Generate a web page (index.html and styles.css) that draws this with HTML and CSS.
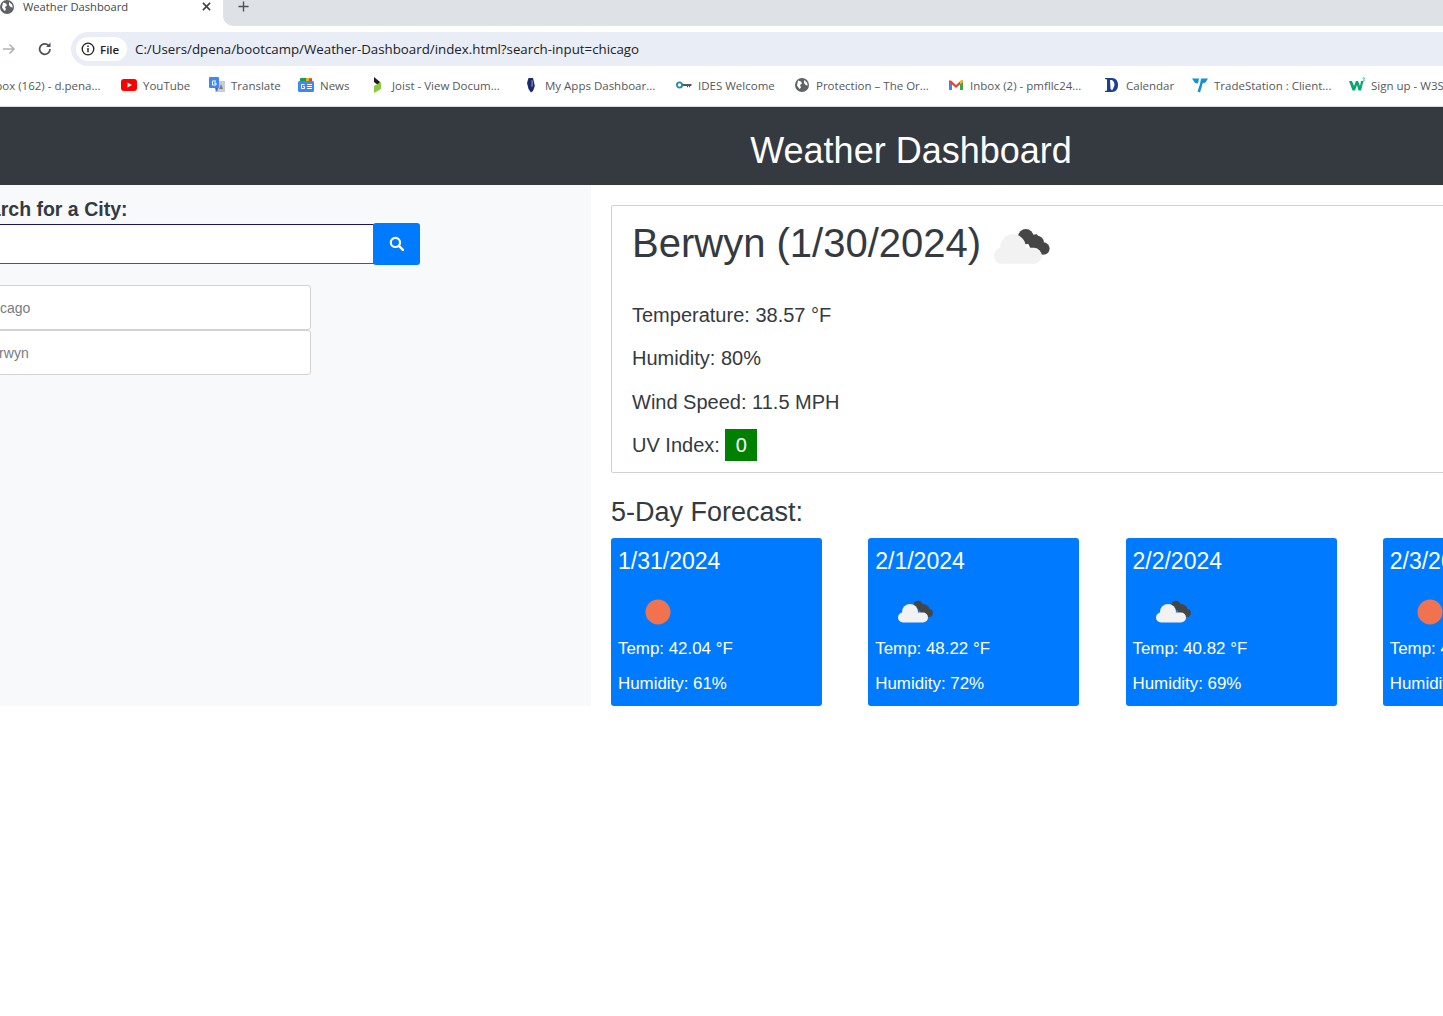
FILE: index.html
```html
<!DOCTYPE html>
<html>
<head>
	<title>Weather Dashboard</title>
	<link rel="stylesheet" href="styles.css">
</head>
<body>
	<svg class="defs" width="0" height="0">
		<symbol id="clouds" viewBox="0 0 50 50">
			<circle cx="28" cy="18.500" r="4.800" fill="#464646"/>
			<circle cx="35" cy="22.300" r="4.400" fill="#464646"/>
			<circle cx="39" cy="26" r="3.900" fill="#464646"/>
			<path d="M27 18l8-1 6 9-8 4z" fill="#464646"/>
			<circle cx="20" cy="25" r="8" fill="#f2f2f2"/>
			<rect x="8" y="25.500" width="30" height="10" rx="5" fill="#f2f2f2"/>
		</symbol>
		<symbol id="sun" viewBox="0 0 50 50">
			<circle cx="25" cy="25" r="12.500" fill="#f0724f"/>
		</symbol>
		<symbol id="globe" viewBox="0 0 16 16">
			<circle cx="8" cy="8" r="7" fill="#5f6368"/>
			<path d="M4 3.500l3 1 1 2-2 1.500 1 2.500-1.500 1.500L3 8.500zM10 3l3 2.500.8 3-2.300-.5-1.500-2z" fill="#fff"/>
		</symbol>
	</svg>

	<div class="tabstrip">
		<div class="tab">
			<svg class="tab-icon"><use href="#globe"/></svg>
			<span class="tab-title">Weather Dashboard</span>
			<svg class="tab-close" viewBox="0 0 10 10"><path d="M1 1l8 8M9 1l-8 8" stroke="#3c4043" stroke-width="1.700"/></svg>
		</div>
		<div class="tabs-rest">
			<svg class="tab-new" viewBox="0 0 12 12"><path d="M6 .5v11M.5 6h11" stroke="#4d5156" stroke-width="1.500"/></svg>
		</div>
	</div>

	<div class="toolbar">
		<svg class="nav-forward" viewBox="0 0 14 14"><path d="M1 7h11M7.500 2.500L12 7l-4.500 4.500" fill="none" stroke="#b0b3b8" stroke-width="1.600"/></svg>
		<svg class="nav-reload" viewBox="0 0 16 16"><path d="M13 8a5.200 5.200 0 1 1-1.600-3.700" fill="none" stroke="#4d5156" stroke-width="1.700"/><path d="M13.500 1.500v4.400H9.100z" fill="#4d5156"/></svg>
		<div class="omnibox">
			<div class="chip">
				<svg class="chip-icon" viewBox="0 0 14 14"><circle cx="7" cy="7" r="5.800" fill="none" stroke="#202124" stroke-width="1.300"/><path d="M7 6v4.200M7 3.500v1.400" stroke="#202124" stroke-width="1.400"/></svg>
				<span>File</span>
			</div>
			<span class="url">C:/Users/dpena/bootcamp/Weather-Dashboard/index.html?search-input=chicago</span>
		</div>
	</div>

	<div class="bookmarks">
		<span class="bm bm-first"><span>Inbox (162) - d.pena...</span></span>
		<span class="bm">
			<svg class="bm-icon" viewBox="0 0 16 16"><rect y="2" width="16" height="12" rx="3" fill="#f00"/><path d="M6.500 5.500v5L11 8z" fill="#fff"/></svg>
			<span>YouTube</span>
		</span>
		<span class="bm">
			<svg class="bm-icon" viewBox="0 0 16 16"><rect x="6" y="4" width="10" height="11" fill="#c9ccd1"/><path d="M12 7l-2 5h4z" fill="#7c8086"/><rect width="10" height="11" rx="1" fill="#4285f4"/><path d="M7 4H3.500v4H7V6H5" fill="none" stroke="#fff" stroke-width="1"/><path d="M6 11l2 4 1-4z" fill="#3367d6"/></svg>
			<span>Translate</span>
		</span>
		<span class="bm">
			<svg class="bm-icon" viewBox="0 0 16 16"><rect x="2" y="1" width="12" height="4" rx="1" fill="#0f9d58"/><rect x="8" y="1" width="6" height="4" rx="1" fill="#f4b400"/><rect x="11" y="1.500" width="3" height="3" fill="#db4437"/><rect y="4" width="16" height="11" rx="1.500" fill="#4285f4"/><path d="M9 7.500h5M9 9.500h5M9 11.500h5" stroke="#fff"/><path d="M6.500 7.500h-3v4h3v-2H5" fill="none" stroke="#fff"/></svg>
			<span>News</span>
		</span>
		<span class="bm">
			<svg class="bm-icon" viewBox="0 0 16 16"><path d="M4 0l6 5-2 3-4-3z" fill="#1c1c1c"/><path d="M4 16V9l7-4v7z" fill="#8dc63f"/></svg>
			<span>Joist - View Docum...</span>
		</span>
		<span class="bm">
			<svg class="bm-icon" viewBox="0 0 16 16"><path d="M5.500 1h4.500l1 4 .8 4-1.800 5-2 1.500L5.500 12 4 6z" fill="#1f2a6b"/><path d="M8.500 3l1.200.5v6l-1.200.5z" fill="#8a93c9"/></svg>
			<span>My Apps Dashboar...</span>
		</span>
		<span class="bm">
			<svg class="bm-icon" viewBox="0 0 16 16"><circle cx="3.500" cy="8" r="2.600" fill="none" stroke="#2a87a8" stroke-width="1.800"/><path d="M6.500 7h9v2H14v1.300h-1V9h-1v1.300h-1V9H6.500z" fill="#4a5a63"/></svg>
			<span>IDES Welcome</span>
		</span>
		<span class="bm">
			<svg class="bm-icon"><use href="#globe"/></svg>
			<span>Protection – The Or...</span>
		</span>
		<span class="bm">
			<svg class="bm-icon" viewBox="0 0 16 16"><path d="M1 13V3.500h2L8 8l5-4.500h2V13h-3V7.500L8 11 4 7.500V13z" fill="#ea4335"/><path d="M1 13V5l3 2.500V13z" fill="#4285f4"/><path d="M12 13V7.500L15 5v8z" fill="#34a853"/><path d="M12 7.500V4.500l1-1h2V5z" fill="#fbbc04"/></svg>
			<span>Inbox (2) - pmfllc24...</span>
		</span>
		<span class="bm">
			<svg class="bm-icon" viewBox="0 0 16 16"><path d="M1 1h7c4 0 6 3 6 7s-2 7-6 7H1v-1l2-.5v-11L1 2z" fill="#1c3f94"/><path d="M6 3h2l2 2 .5 3-1 3-1.500 2.500-1.500-2z" fill="#fff"/></svg>
			<span>Calendar</span>
		</span>
		<span class="bm">
			<svg class="bm-icon" viewBox="0 0 16 16"><path d="M0 1.500h7L6 6.500 3 6zM9 1.500h7l-2.500 4-3 1L10 9l-2 6.500-2.500-1L8 7z" fill="#1593d0"/></svg>
			<span>TradeStation : Client...</span>
		</span>
		<span class="bm">
			<svg class="bm-icon" viewBox="0 0 16 16"><path d="M0 4h3l2 5 2-5h2l2 5 1-5h2.500l-2.500 9.500h-2.500L8 8l-2 5.500H3.500z" fill="#04aa6d"/><path d="M13.500 1h2v.6l-.8.8c.8 0 .8 1.800-.2 1.800h-1" fill="none" stroke="#04aa6d" stroke-width=".7"/></svg>
			<span>Sign up - W3Schools</span>
		</span>
	</div>

	<div class="page">
		<header class="page-head">
			<h1>Weather Dashboard</h1>
		</header>
		<div class="layout">
			<aside class="sidebar">
				<label class="search-label" for="search-input">Search for a City:</label>
				<form class="search-form">
					<input class="search-input" id="search-input" type="text">
					<button class="search-btn" type="button" aria-label="Search">
						<svg class="search-icon" viewBox="0 0 14 14" width="15" height="15"><circle cx="6" cy="6" r="4.300" fill="none" stroke="#fff" stroke-width="2"/><path d="M9.200 9.200l3.800 3.800" stroke="#fff" stroke-width="2.200" stroke-linecap="round"/></svg>
					</button>
				</form>
				<ul class="history">
					<li>Chicago</li>
					<li>Berwyn</li>
				</ul>
			</aside>
			<main class="content">
				<section class="today">
					<div class="today-title">
						<h2>Berwyn (1/30/2024)</h2>
						<svg class="today-icon"><use href="#clouds"/></svg>
					</div>
					<p>Temperature: 38.57 °F</p>
					<p>Humidity: 80%</p>
					<p>Wind Speed: 11.5 MPH</p>
					<p>UV Index: <span class="uv">0</span></p>
				</section>
				<h3 class="forecast-title">5-Day Forecast:</h3>
				<div class="forecast">
					<div class="day">
						<h4>1/31/2024</h4>
						<svg class="day-icon"><use href="#sun"/></svg>
						<p>Temp: 42.04 °F</p>
						<p>Humidity: 61%</p>
					</div>
					<div class="day">
						<h4>2/1/2024</h4>
						<svg class="day-icon"><use href="#clouds"/></svg>
						<p>Temp: 48.22 °F</p>
						<p>Humidity: 72%</p>
					</div>
					<div class="day">
						<h4>2/2/2024</h4>
						<svg class="day-icon"><use href="#clouds"/></svg>
						<p>Temp: 40.82 °F</p>
						<p>Humidity: 69%</p>
					</div>
					<div class="day">
						<h4>2/3/2024</h4>
						<svg class="day-icon"><use href="#sun"/></svg>
						<p>Temp: 41.50 °F</p>
						<p>Humidity: 66%</p>
					</div>
					<div class="day">
						<h4>2/4/2024</h4>
						<svg class="day-icon"><use href="#sun"/></svg>
						<p>Temp: 44.10 °F</p>
						<p>Humidity: 63%</p>
					</div>
				</div>
			</main>
		</div>
	</div>
</body>
</html>
```

FILE: styles.css
```css
html, body {
	margin: 0;
	height: 100%;
	overflow: hidden;
	background: #fff;
}
body {
	font-family: "Liberation Sans", Arial, sans-serif;
	color: #343a40;
}
.defs {
	display: block;
	height: 0;
}

/* browser chrome */
.tabstrip {
	display: flex;
	height: 26px;
	font-family: "Open Sans", sans-serif;
}
.tab {
	display: flex;
	align-items: center;
	width: 223px;
	height: 13px;
	flex: none;
}
.tab-icon {
	width: 16px;
	height: 16px;
	margin-left: -1px;
	flex: none;
}
.tab-title {
	margin-left: 8px;
	font-size: 11.200px;
	color: #45484c;
}
.tab-close {
	width: 9px;
	height: 9px;
	margin-left: auto;
	margin-right: 12px;
}
.tabs-rest {
	flex: 1;
	background: #dee1e6;
	border-bottom-left-radius: 10px;
}
.tab-new {
	display: block;
	width: 11px;
	height: 11px;
	margin: 1px 0 0 15px;
}
.toolbar {
	display: flex;
	align-items: center;
	height: 42px;
	padding-top: 2px;
	font-family: "Open Sans", sans-serif;
}
.nav-forward {
	width: 14px;
	height: 14px;
	margin-left: 2px;
	flex: none;
}
.nav-reload {
	width: 16px;
	height: 16px;
	margin-left: 21px;
	flex: none;
}
.omnibox {
	display: flex;
	align-items: center;
	flex: 1;
	height: 34px;
	margin-left: 18px;
	margin-right: -20px;
	padding-left: 5px;
	background: #e9edf6;
	border-radius: 17px;
}
.chip {
	display: flex;
	align-items: center;
	height: 24px;
	width: 51px;
	box-sizing: border-box;
	padding-left: 5px;
	background: #fff;
	border-radius: 12px;
	font-size: 11.500px;
	font-weight: 600;
	color: #202124;
}
.chip-icon {
	width: 14px;
	height: 14px;
	margin-right: 5px;
}
.url {
	margin-left: 8px;
	font-size: 13.300px;
	color: #202124;
	white-space: nowrap;
}
.bookmarks {
	display: flex;
	align-items: center;
	gap: 20px;
	height: 30px;
	padding-bottom: 6px;
	border-bottom: 1px solid #d8dade;
	font-family: "Open Sans", sans-serif;
	font-size: 11.500px;
	color: #55585c;
	white-space: nowrap;
}
.bm {
	display: flex;
	align-items: center;
	gap: 6px;
	flex: none;
}
.bm-first {
	margin-left: -15px;
}
.bm-icon {
	width: 16px;
	height: 16px;
	flex: none;
}
/* the bar's titles are a bit wider or narrower than this font sets them */
.bm:nth-child(1) span { width: 116px; }
.bm:nth-child(2) span { width: 46px; }
.bm:nth-child(3) span { width: 47px; }
.bm:nth-child(4) span { width: 30px; }
.bm:nth-child(5) span { width: 111px; }
.bm:nth-child(6) span { width: 111px; }
.bm:nth-child(7) span { width: 76px; }
.bm:nth-child(8) span { width: 112px; }
.bm:nth-child(9) span { width: 114px; }
.bm:nth-child(10) span { width: 46px; }
.bm:nth-child(11) span { width: 115px; }

/* page, scrolled sideways in the shot */
.page {
	width: 1920px;
	margin-left: -49px;
}
.page-head {
	height: 78px;
	box-sizing: border-box;
	padding-top: 22px;
	background: #343a40;
	text-align: center;
}
.page-head h1 {
	margin: 0;
	font-size: 36px;
	font-weight: 400;
	line-height: 43px;
	color: #fff;
}
.layout {
	display: flex;
}
.sidebar {
	width: 640px;
	flex: none;
	box-sizing: border-box;
	padding: 13px 15px 0;
	background: #f8f9fa;
}
.search-label {
	display: block;
	font-size: 19.500px;
	font-weight: 700;
	line-height: 23px;
}
.search-form {
	display: flex;
	align-items: center;
	margin-top: 2px;
}
.search-input {
	width: 408px;
	height: 40px;
	box-sizing: border-box;
	padding: 0;
	background: #fff;
	border: 1px solid #2f4fd6;
	border-top-color: #14146e;
	border-radius: 2px 0 0 2px;
}
.search-btn {
	display: flex;
	align-items: center;
	justify-content: center;
	width: 47px;
	height: 42px;
	margin-left: -1px;
	padding: 0;
	border: 0;
	border-radius: 3px;
	background: #007bff;
}
.search-icon {
	margin-bottom: 2px;
}
.history {
	width: 345px;
	margin: 20px 0 0;
	padding: 0;
	list-style: none;
	font-size: 14px;
	color: #777c82;
}
.history li {
	height: 45px;
	box-sizing: border-box;
	padding: 0 12px;
	line-height: 45px;
	background: #fff;
	border: 1px solid #d2d2d2;
	border-radius: 3px;
}
.history li + li {
	padding-left: 15px;
}
.content {
	flex: 1;
	padding: 20px 20px 0;
}
.today {
	height: 268px;
	box-sizing: border-box;
	padding: 13px 20px 0;
	border: 1px solid #cfd1d3;
	border-radius: 2px;
	font-size: 20px;
}
.today-title {
	display: flex;
	align-items: flex-start;
	margin-bottom: 33px;
}
.today-title h2 {
	margin: 0;
	font-size: 40px;
	font-weight: 400;
	line-height: 48px;
}
.today-icon {
	width: 80px;
	height: 80px;
	margin: -12px 0 -20px;
}
.today p {
	margin: 0 0 13.300px;
	line-height: 30px;
}
.uv {
	display: inline-block;
	width: 32px;
	height: 32px;
	margin-top: -4px;
	line-height: 32px;
	text-align: center;
	color: #fff;
	background: #008000;
	vertical-align: middle;
}
.forecast-title {
	margin: 22px 0 9px;
	font-size: 27px;
	font-weight: 400;
	line-height: 34px;
}
.forecast {
	display: flex;
	justify-content: space-between;
}
.day {
	width: 211px;
	height: 168px;
	box-sizing: border-box;
	padding: 8px 7px 0;
	background: #007bff;
	border-radius: 3px;
	color: #fff;
	font-size: 16.900px;
}
.day h4 {
	margin: 0;
	font-size: 23px;
	font-weight: 400;
	line-height: 30px;
}
.day-icon {
	display: block;
	width: 50px;
	height: 50px;
	margin: 11px 0 2px 15px;
}
.day p {
	margin: 0 0 15px;
	line-height: 20px;
}
```
